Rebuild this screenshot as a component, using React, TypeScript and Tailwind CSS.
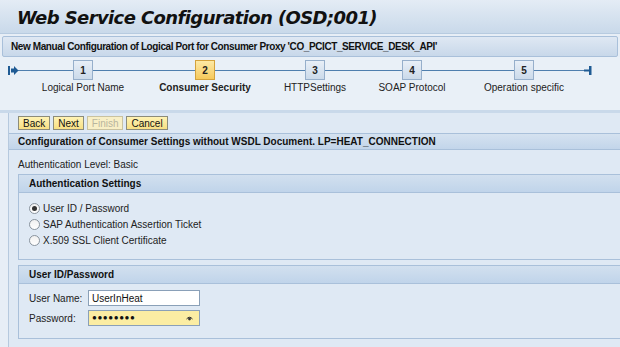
import React from "react";

const Step = ({ n, label, active }: { n: number; label: string; active?: boolean }) => (
  <div className="relative z-10 flex w-[112px] flex-col items-center">
    <div
      className={
        active
          ? "flex h-[20px] w-[20px] items-center justify-center border border-[#d4a23c] bg-gradient-to-b from-[#fde9a4] to-[#f6c95a] text-[10px] font-bold text-[#222]"
          : "flex h-[20px] w-[20px] items-center justify-center border border-[#96afcb] bg-gradient-to-b from-[#e8eff7] to-[#cbdaea] text-[10px] font-bold text-[#222]"
      }
    >
      {n}
    </div>
    <div className={"mt-[2px] whitespace-nowrap text-[10px] leading-[12px] text-[#222] " + (active ? "font-bold" : "")}>{label}</div>
  </div>
);

const Btn = ({ children, disabled }: { children: React.ReactNode; disabled?: boolean }) => (
  <div
    className={
      disabled
        ? "flex h-[14px] items-center border border-[#c9c2a0] bg-[#f8efc6] px-[4px] text-[10px] text-[#b9b59e]"
        : "flex h-[14px] items-center border border-[#8c8c7a] bg-gradient-to-b from-[#fff3b4] to-[#f7df83] px-[4px] text-[10px] text-[#111]"
    }
  >
    {children}
  </div>
);

const Radio = ({ checked, label }: { checked?: boolean; label: string }) => (
  <div className="flex h-[16px] items-center gap-[3px]">
    <div className="flex h-[11px] w-[11px] items-center justify-center rounded-full border border-[#8a949e] bg-gradient-to-b from-[#f0f0f0] to-[#ffffff]">
      {checked && <div className="h-[5px] w-[5px] rounded-full bg-[#333]" />}
    </div>
    <span className="text-[10px] text-[#222]">{label}</span>
  </div>
);

export default function App() {
  return (
    <div
      className="h-[347px] w-[620px] overflow-hidden bg-[#e7eef6] text-[#222]"
      style={{ fontFamily: '"Liberation Sans", Arial, sans-serif' }}
    >
      {/* Title */}
      <div className="flex h-[34px] items-center border-b border-[#b7cbe0] bg-gradient-to-b from-[#e4ecf5] to-[#c9d9ea] pl-[17px] pt-[2px]">
        <span
          className="text-[18px] font-bold italic tracking-[-0.6px] text-[#111]"
          style={{ fontFamily: '"DejaVu Sans", Verdana, sans-serif' }}
        >
          Web Service Configuration (OSD;001)
        </span>
      </div>
      {/* Subtitle */}
      <div className="px-[2px] pt-[2px]">
        <div className="flex h-[21px] items-center rounded-[2px] border border-[#a9c0da] bg-gradient-to-b from-[#dfe8f3] to-[#c8d8ea] pl-[8px] text-[10px] font-bold tracking-[-0.4px] text-[#111]">
          New Manual Configuration of Logical Port for Consumer Proxy 'CO_PCICT_SERVICE_DESK_API'
        </div>
      </div>
      {/* Steps */}
      <div className="relative h-[56px] border-b-[3px] border-[#c9d9ea] bg-[#e9f0f7]">
        <div className="absolute left-[18px] top-[13px] h-[1px] w-[570px] bg-[#4f7fae]" />
        <svg className="absolute left-[8px] top-[9px]" width="11" height="9" viewBox="0 0 11 9">
          <rect x="0" y="0" width="2" height="9" fill="#1f5b94" />
          <path d="M3 2.5 H6 V0 L10.5 4.5 L6 9 V6.5 H3 Z" fill="#1f5b94" />
        </svg>
        <svg className="absolute left-[584px] top-[9px]" width="8" height="9" viewBox="0 0 8 9">
          <rect x="0" y="3.5" width="6" height="2" fill="#1f5b94" />
          <rect x="5" y="0" width="2.5" height="9" fill="#1f5b94" />
        </svg>
        <div className="absolute left-[27px] top-[3px] flex">
          <Step n={1} label="Logical Port Name" />
          <div className="w-[10px]" />
          <Step n={2} label="Consumer Security" active />
          <div className="-ml-[2px]" />
          <Step n={3} label="HTTPSettings" />
          <div className="-ml-[15px]" />
          <Step n={4} label="SOAP Protocol" />
          <Step n={5} label="Operation specific" />
        </div>
      </div>
      {/* Main */}
      <div className="ml-[8px] border-l border-[#b6c9de] bg-[#dfe9f4]">
        <div className="flex gap-[3px] pl-[9px] pt-[3px] pb-[3px]">
          <Btn>Back</Btn>
          <Btn>Next</Btn>
          <Btn disabled>Finish</Btn>
          <Btn>Cancel</Btn>
        </div>
        <div className="flex h-[17px] items-center border-y border-[#a9c0da] bg-gradient-to-b from-[#d5e2f0] to-[#c2d5ea] pl-[9px] text-[10px] font-bold text-[#111]">
          Configuration of Consumer Settings without WSDL Document. LP=HEAT_CONNECTION
        </div>
        <div className="pl-[9px] pt-[9px] pb-[10px]">
          <div className="h-[12px] text-[10px] leading-[12px] text-[#222]">Authentication Level: Basic</div>
          <div className="mt-[3px] border border-r-0 border-[#a9c0da]">
            <div className="flex h-[18px] items-center border-b border-[#a9c0da] bg-gradient-to-b from-[#d2e0ef] to-[#c0d4ea] pl-[10px] text-[10px] font-bold text-[#111]">
              Authentication Settings
            </div>
            <div className="flex h-[66px] flex-col pl-[10px] pt-[7px]">
              <Radio checked label="User ID / Password" />
              <Radio label="SAP Authentication Assertion Ticket" />
              <Radio label="X.509 SSL Client Certificate" />
            </div>
          </div>
          <div className="mt-[5px] border border-r-0 border-[#a9c0da]">
            <div className="flex h-[18px] items-center border-b border-[#a9c0da] bg-gradient-to-b from-[#d2e0ef] to-[#c0d4ea] pl-[10px] text-[10px] font-bold text-[#111]">
              User ID/Password
            </div>
            <div className="flex h-[54px] flex-col gap-[4px] pl-[10px] pt-[6px]">
              <div className="flex items-center">
                <span className="w-[59px] text-[10px] text-[#222]">User Name:</span>
                <div className="flex h-[16px] w-[112px] items-center border border-[#8aa0b8] bg-white pl-[3px] text-[10px] text-[#111]">
                  UserInHeat
                </div>
              </div>
              <div className="flex items-center">
                <span className="w-[59px] text-[10px] text-[#222]">Password:</span>
                <div className="flex h-[16px] w-[112px] items-center justify-between border border-[#8aa0b8] bg-[#fbeda3] pl-[3px] pr-[6px] text-[10px] text-[#111]">
                  <span className="text-[8px] font-bold tracking-[0.6px]">●●●●●●●●</span>
                  <svg width="7" height="5" viewBox="0 0 7 5">
                    <path d="M0.5 3 Q3.5 -0.5 6.5 3" stroke="#333" strokeWidth="1" fill="none" />
                    <circle cx="3.5" cy="3" r="1.4" fill="#333" />
                  </svg>
                </div>
              </div>
            </div>
          </div>
        </div>
      </div>
    </div>
  );
}
